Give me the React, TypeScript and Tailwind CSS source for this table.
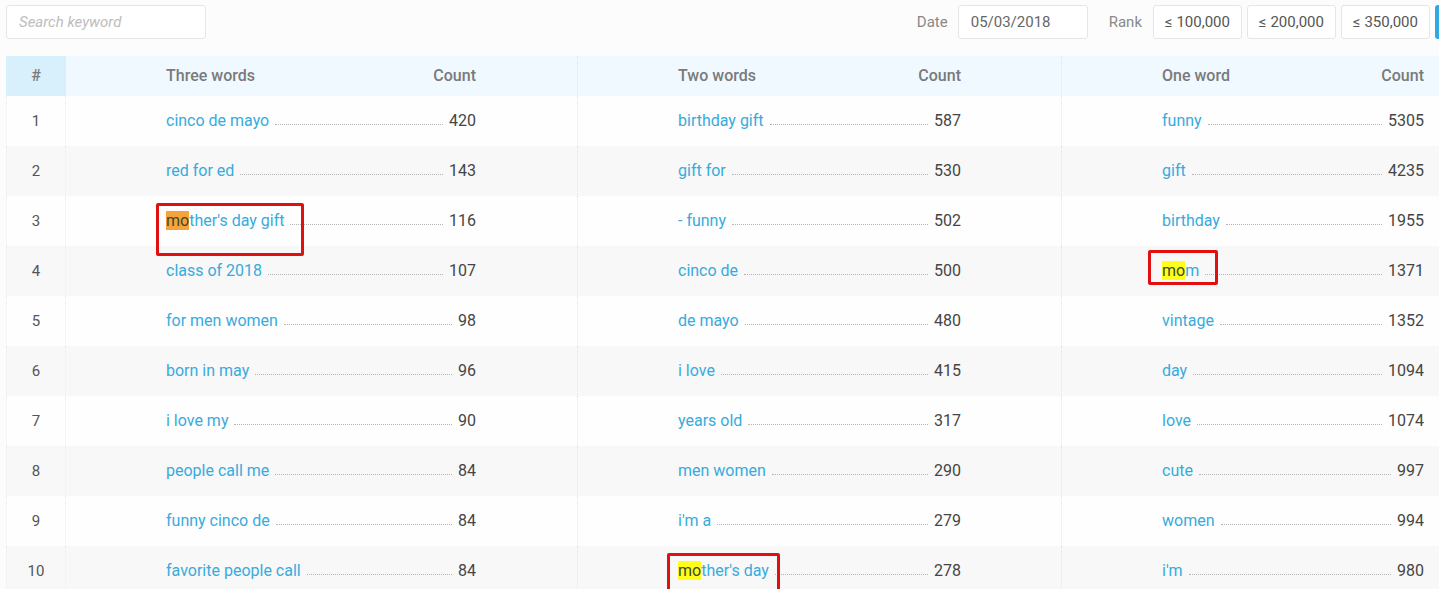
import React from 'react';

type Cell = { word: string; count: number; hl?: 'orange' | 'yellow' };

const rows: [Cell, Cell, Cell][] = [
  [{ word: 'cinco de mayo', count: 420 }, { word: 'birthday gift', count: 587 }, { word: 'funny', count: 5305 }],
  [{ word: 'red for ed', count: 143 }, { word: 'gift for', count: 530 }, { word: 'gift', count: 4235 }],
  [{ word: "mother's day gift", count: 116, hl: 'orange' }, { word: '- funny', count: 502 }, { word: 'birthday', count: 1955 }],
  [{ word: 'class of 2018', count: 107 }, { word: 'cinco de', count: 500 }, { word: 'mom', count: 1371, hl: 'yellow' }],
  [{ word: 'for men women', count: 98 }, { word: 'de mayo', count: 480 }, { word: 'vintage', count: 1352 }],
  [{ word: 'born in may', count: 96 }, { word: 'i love', count: 415 }, { word: 'day', count: 1094 }],
  [{ word: 'i love my', count: 90 }, { word: 'years old', count: 317 }, { word: 'love', count: 1074 }],
  [{ word: 'people call me', count: 84 }, { word: 'men women', count: 290 }, { word: 'cute', count: 997 }],
  [{ word: 'funny cinco de', count: 84 }, { word: "i'm a", count: 279 }, { word: 'women', count: 994 }],
  [{ word: 'favorite people call', count: 84 }, { word: "mother's day", count: 278, hl: 'yellow' }, { word: "i'm", count: 980 }],
];

const groups = [
  { title: 'Three words', cls: 'w-[511px] pl-[100px] pr-[101px]' },
  { title: 'Two words', cls: 'w-[484px] pl-[100px] pr-[100px] border-l border-dotted border-[#e3e6e8]' },
  { title: 'One word', cls: 'w-[378px] pl-[100px] pr-[15px] border-l border-dotted border-[#e3e6e8]' },
];

function Word({ c }: { c: Cell }) {
  if (!c.hl) return <span className="text-[#37abdd]">{c.word}</span>;
  const bg = c.hl === 'orange' ? 'bg-[#f7a23b]' : 'bg-[#ffff1a]';
  return (
    <span className="text-[#37abdd]">
      <span className={`${bg} text-[#3d4a2a]`}>{c.word.slice(0, 2)}</span>
      {c.word.slice(2)}
    </span>
  );
}

function RankButton({ label }: { label: string }) {
  return (
    <div className="w-[89px] h-[34px] flex items-center justify-center border border-[#e6e6e6] rounded-[3px] bg-white text-[15px] text-[#555]">
      {label}
    </div>
  );
}

export default function App() {
  return (
    <div className="relative w-[1439px] h-[589px] overflow-hidden bg-[#fcfcfc] font-['Roboto',sans-serif]">
      <div className="flex justify-between pl-[6px] pt-[5px] h-[56px] items-start">
        <div className="w-[200px] h-[34px] border border-[#e6e6e6] rounded-[3px] bg-white flex items-center px-[12px] text-[15px] italic text-[#bdbdbd]">
          Search keyword
        </div>
        <div className="flex items-center">
          <span className="text-[15px] text-[#888] mr-[10px]">Date</span>
          <div className="w-[130px] h-[34px] border border-[#e6e6e6] rounded-[3px] bg-white flex items-center px-[12px] text-[15px] text-[#666]">
            05/03/2018
          </div>
          <span className="text-[15px] text-[#888] ml-[21px] mr-[11px]">Rank</span>
          <div className="flex items-center gap-[5px]">
            <RankButton label="≤ 100,000" />
            <RankButton label="≤ 200,000" />
            <RankButton label="≤ 350,000" />
            <div className="w-[40px] h-[34px] rounded-[3px] bg-[#2fa9e1] -mr-[36px]" />
          </div>
        </div>
      </div>

      <div className="ml-[6px] w-[1433px]">
        <div className="flex h-[40px] text-[16px] font-medium text-[#7a7a7a]">
          <div className="w-[60px] bg-[#d8effc] flex items-center justify-center">#</div>
          {groups.map((g) => (
            <div key={g.title} className={`${g.cls} bg-[#eff9ff] flex items-center justify-between`}>
              <span>{g.title}</span>
              <span>Count</span>
            </div>
          ))}
        </div>
        {rows.map((r, i) => (
          <div
            key={i}
            className={`flex h-[50px] text-[16px] ${i % 2 === 0 ? 'bg-[#fefefe]' : 'bg-[#f8f8f8]'}`}
          >
            <div className="w-[60px] flex items-center justify-center text-[15px] text-[#555] border-l border-r border-dotted border-[#ececec]">
              {i + 1}
            </div>
            {r.map((c, j) => (
              <div key={j} className={`${groups[j].cls} flex items-center`}>
                <Word c={c} />
                <div className="flex-1 mx-[6px] mt-[6px] border-b border-dotted border-[#b4b4b4]" />
                <span className="text-[#454545]">{c.count}</span>
              </div>
            ))}
          </div>
        ))}
      </div>

      {/* annotation boxes */}
      <div className="absolute left-[156px] top-[203px] w-[148px] h-[53px] border-[3px] border-[#e01010] rounded-[2px] pointer-events-none" />
      <div className="absolute left-[1148px] top-[250px] w-[70px] h-[35px] border-[3px] border-[#e01010] rounded-[2px] pointer-events-none" />
      <div className="absolute left-[667px] top-[553px] w-[113px] h-[50px] border-[3px] border-[#e01010] rounded-[2px] pointer-events-none" />
    </div>
  );
}
